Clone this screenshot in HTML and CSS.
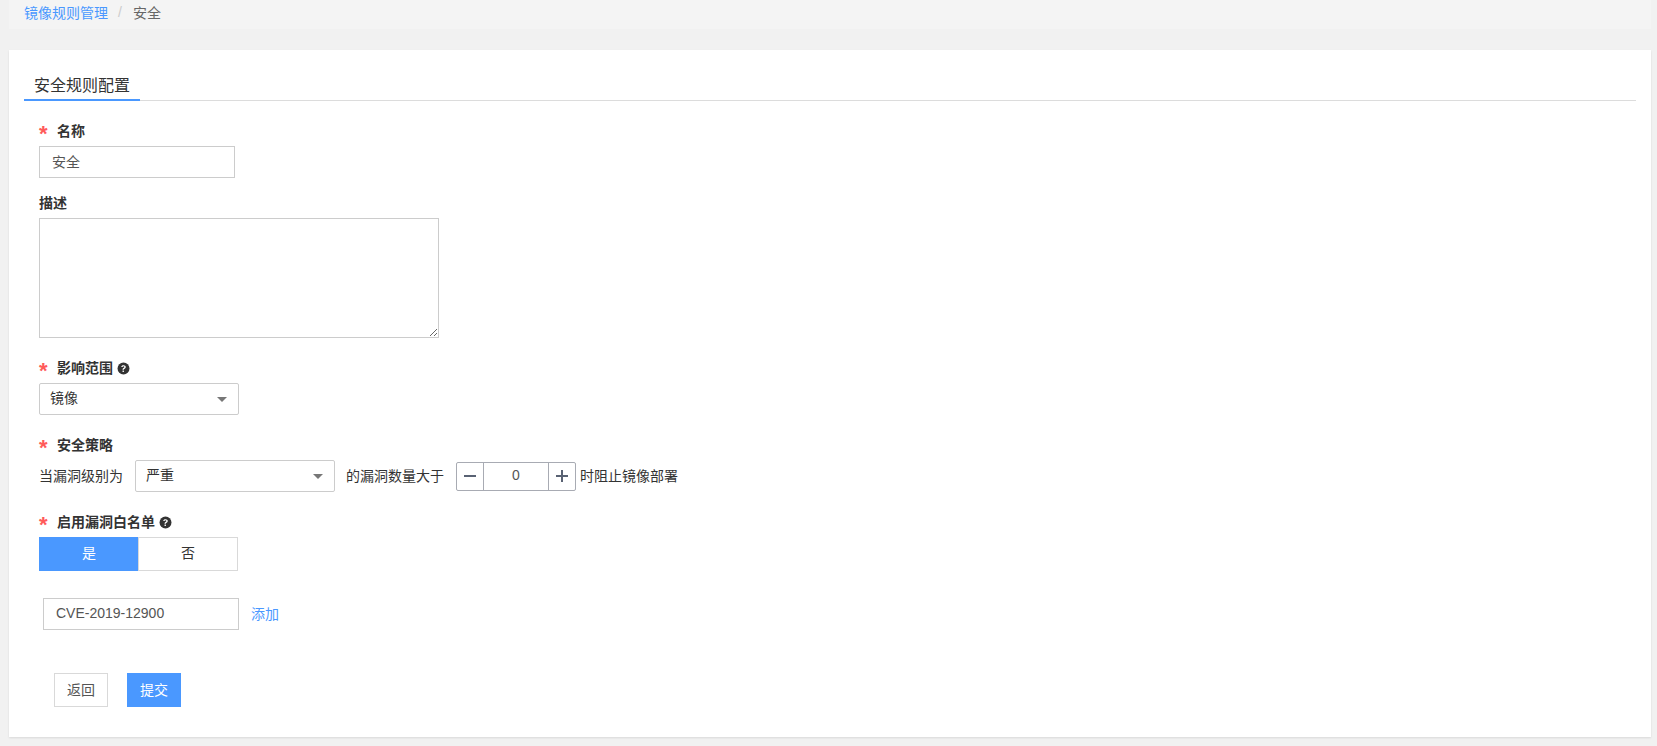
FILE: index.html
```html
<!DOCTYPE html>
<html lang="zh-CN">
<head>
    <meta charset="UTF-8">
    <title>安全规则配置</title>
    <link rel="stylesheet" href="styles.css">
</head>
<body>
    <div class="breadcrumb">
        <a class="link" href="#">镜像规则管理</a>
        <span class="sep">/</span>
        <span class="current">安全</span>
    </div>

    <div class="card">
        <div class="tabs"><span class="tab">安全规则配置</span></div>

        <form class="form">
            <div class="field field-name">
                <label class="label required">名称</label>
                <input class="input" type="text" value="安全">
            </div>

            <div class="field field-desc">
                <label class="label">描述</label>
                <textarea class="textarea"></textarea>
            </div>

            <div class="field field-scope">
                <label class="label required">影响范围
                    <svg class="help" viewBox="0 0 12 12"><circle cx="6" cy="6" r="5.5" fill="#333"/><path d="M3.9 4.7C4 3.5 4.9 2.9 6 2.9c1.2 0 2.1.7 2.1 1.7 0 .8-.5 1.2-1.1 1.6-.5.3-.7.5-.7 1H5.1c0-.9.3-1.3.9-1.7.5-.3.8-.5.8-.9s-.3-.7-.8-.7-.8.3-.9.8z" fill="#fff"/><rect x="5.1" y="7.9" width="1.3" height="1.3" fill="#fff"/></svg>
                </label>
                <div class="select">镜像<i class="caret"></i></div>
            </div>

            <div class="field field-policy">
                <label class="label required">安全策略</label>
                <div class="policy">
                    <span>当漏洞级别为</span>
                    <div class="select select-level">严重<i class="caret"></i></div>
                    <span>的漏洞数量大于</span>
                    <div class="stepper">
                        <span class="step">
                            <svg width="12" height="12" viewBox="0 0 12 12"><path d="M0 6h12" stroke="#596273" stroke-width="2"/></svg>
                        </span>
                        <span class="step-value">0</span>
                        <span class="step">
                            <svg width="12" height="12" viewBox="0 0 12 12"><path d="M0 6h12M6 0v12" stroke="#596273" stroke-width="2"/></svg>
                        </span>
                    </div>
                    <span class="policy-end">时阻止镜像部署</span>
                </div>
            </div>

            <div class="field field-white">
                <label class="label required">启用漏洞白名单
                    <svg class="help" viewBox="0 0 12 12"><circle cx="6" cy="6" r="5.5" fill="#333"/><path d="M3.9 4.7C4 3.5 4.9 2.9 6 2.9c1.2 0 2.1.7 2.1 1.7 0 .8-.5 1.2-1.1 1.6-.5.3-.7.5-.7 1H5.1c0-.9.3-1.3.9-1.7.5-.3.8-.5.8-.9s-.3-.7-.8-.7-.8.3-.9.8z" fill="#fff"/><rect x="5.1" y="7.9" width="1.3" height="1.3" fill="#fff"/></svg>
                </label>
                <div class="switch">
                    <span class="switch-item active">是</span>
                    <span class="switch-item">否</span>
                </div>
            </div>

            <div class="cve-row">
                <input class="input" type="text" value="CVE-2019-12900">
                <a class="link" href="#">添加</a>
            </div>

            <div class="actions">
                <button class="btn" type="button">返回</button>
                <button class="btn btn-primary" type="button">提交</button>
            </div>
        </form>
    </div>
</body>
</html>
```

FILE: styles.css
```css
* {
    box-sizing: border-box;
}
body {
    margin: 0;
    height: 746px;
    overflow: hidden;
    background-color: #f1f1f1;
    color: #333;
    font-family: "Liberation Sans", "Noto Sans CJK SC", sans-serif;
    font-size: 14px;
}
.link {
    color: #4a98ff;
    text-decoration: none;
}
.breadcrumb {
    display: flex;
    align-items: center;
    height: 29px;
    margin: 0 6px 21px 9px;
    padding: 0 15px 6px;
    background: #f4f4f4;
}
.breadcrumb .sep {
    margin: 0 11px 0 10px;
    color: #ccc;
}
.breadcrumb .current {
    color: #666;
}
.card {
    height: 687px;
    margin: 0 6px 0 9px;
    padding: 20px 15px 0;
    background: #fff;
    box-shadow: 0 1px 2px rgba(0,0,0,0.1);
}
.tabs {
    height: 31px;
    border-bottom: 1px solid #dcdcdc;
}
.tab {
    display: inline-block;
    height: 31px;
    padding: 0 10px;
    border-bottom: 2px solid #4a98ff;
    color: #333;
    font-size: 16px;
    line-height: 32px;
}
.form {
    padding-left: 15px;
}
.field {
    display: flex;
    flex-direction: column;
    align-items: flex-start;
}
.label {
    display: flex;
    align-items: center;
    height: 20px;
    margin-bottom: 5px;
    padding-bottom: 2px;
    color: #333;
    font-weight: 700;
}
.required::before {
    content: "*";
    width: 18px;
    color: #ff5a5a;
    font-size: 22px;
    line-height: 20px;
    padding-top: 8px;
}
.help {
    width: 13px;
    height: 13px;
    margin: 2px 0 0 4px;
}
.field-name {
    margin-top: 20px;
}
.field-desc {
    margin-top: 15px;
}
.field-scope {
    margin-top: 20px;
}
.field-policy {
    margin-top: 20px;
}
.field-white {
    margin-top: 20px;
}
.input {
    width: 196px;
    height: 32px;
    padding: 0 12px 2px;
    border: 1px solid #ccc;
    outline: none;
    color: #555;
    font-family: inherit;
    font-size: 14px;
}
.textarea {
    display: block;
    width: 400px;
    height: 120px;
    border: 1px solid #ccc;
    outline: none;
}
.select {
    position: relative;
    width: 200px;
    height: 32px;
    padding: 0 10px;
    border: 1px solid #ccc;
    border-radius: 2px;
    background: #fff;
    line-height: 28px;
}
.caret {
    position: absolute;
    top: 13px;
    right: 11px;
    width: 0;
    height: 0;
    border-top: 5px solid #777;
    border-left: 5px solid transparent;
    border-right: 5px solid transparent;
}
.policy {
    display: flex;
    align-items: center;
    height: 32px;
}
.policy > span {
    padding-bottom: 2px;
}
.select-level {
    margin: 0 11px 0 12px;
}
.stepper {
    display: flex;
    width: 120px;
    height: 29px;
    margin: 0 1px 0 12px;
    border: 1px solid #a8abb3;
    border-radius: 2px;
}
.step {
    display: flex;
    align-items: center;
    justify-content: center;
    flex: 0 0 26px;
}
.step-value {
    flex: 1;
    border-left: 1px solid #a8abb3;
    border-right: 1px solid #a8abb3;
    color: #555;
    text-align: center;
    line-height: 25px;
}
.policy-end {
    margin-left: 3px;
}
.switch {
    display: flex;
}
.switch-item {
    width: 100px;
    height: 34px;
    border: 1px solid #d9d9d9;
    line-height: 30px;
    text-align: center;
}
.switch-item + .switch-item {
    margin-left: -1px;
}
.switch-item.active {
    border-color: #4a98ff;
    background: #4a98ff;
    color: #fff;
}
.cve-row {
    display: flex;
    align-items: center;
    gap: 12px;
    margin: 27px 0 0 4px;
}
.cve-row .link {
    padding-bottom: 2px;
}
.actions {
    display: flex;
    gap: 19px;
    margin: 43px 0 0 15px;
}
.btn {
    width: 54px;
    height: 34px;
    padding: 0 0 2px;
    border: 1px solid #d9d9d9;
    background: #fff;
    color: #555;
    font-family: inherit;
    font-size: 14px;
}
.btn-primary {
    border-color: #4a98ff;
    background: #4a98ff;
    color: #fff;
}
```
